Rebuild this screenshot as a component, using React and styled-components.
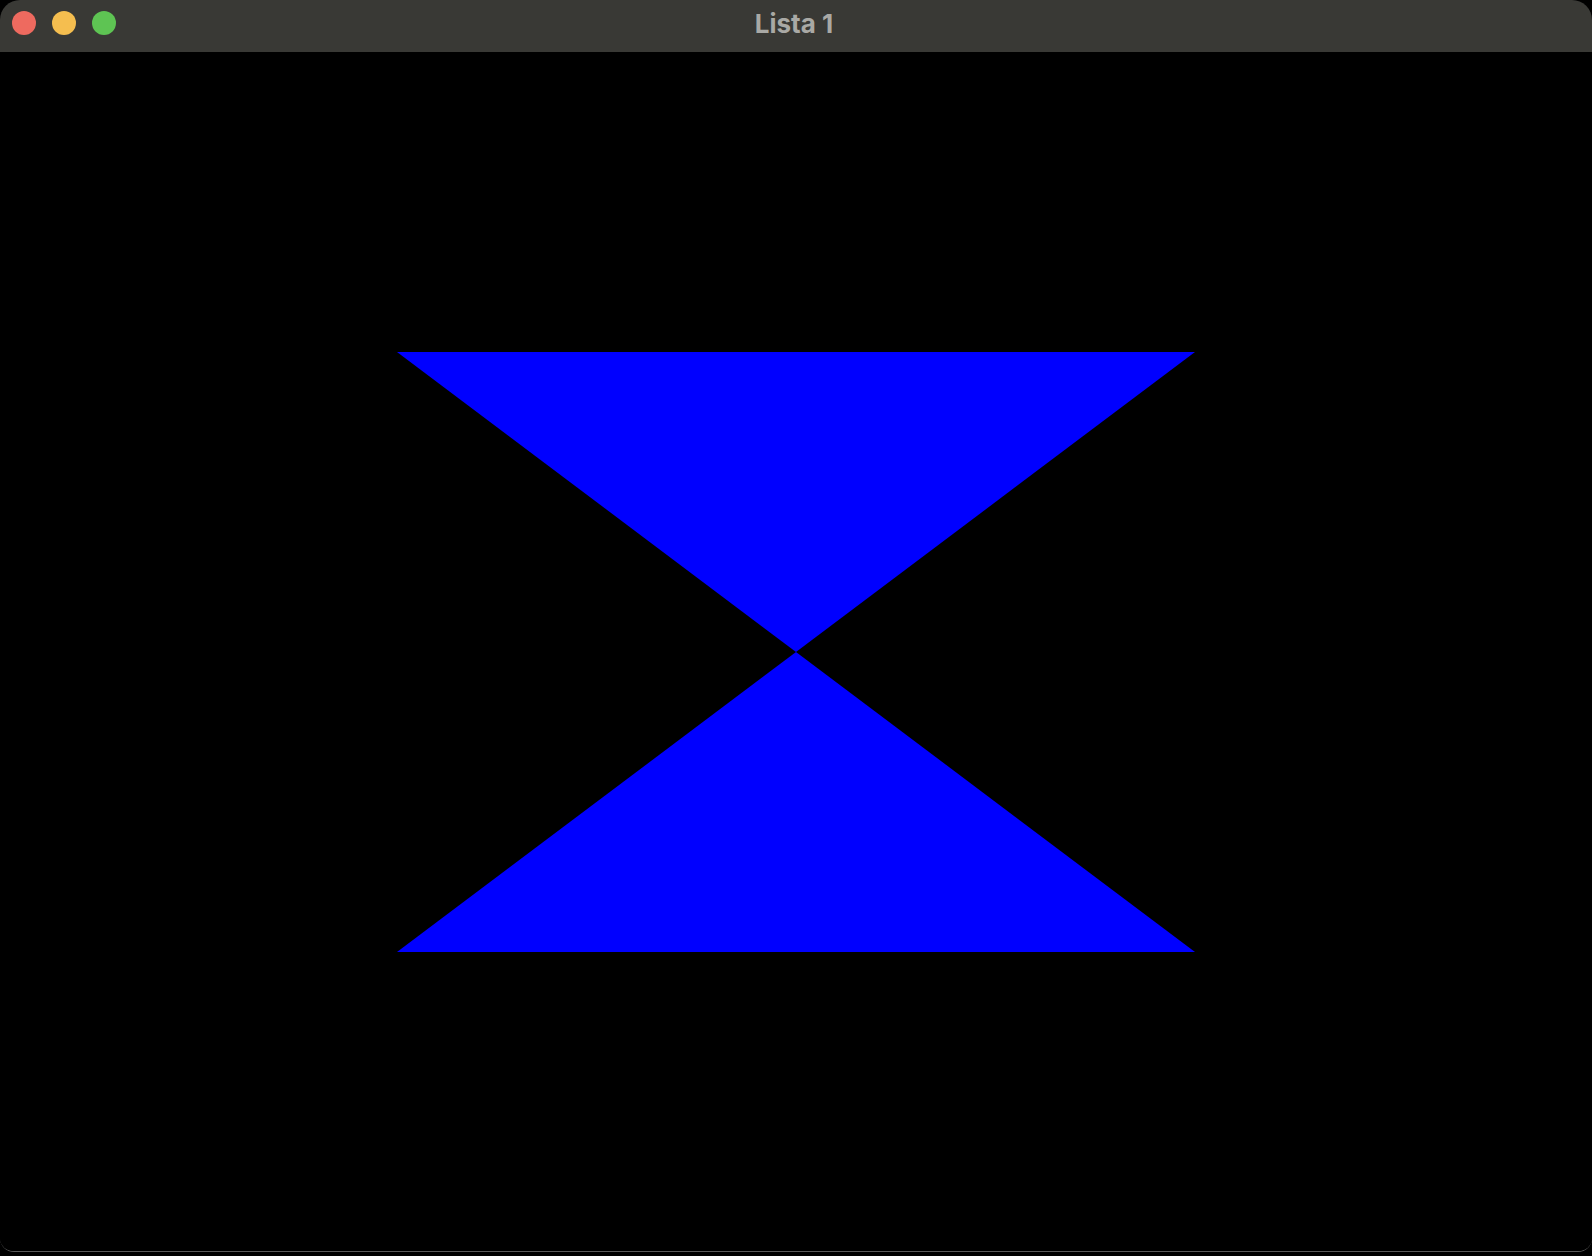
import styled, { createGlobalStyle } from 'styled-components';

const GlobalStyle = createGlobalStyle`
    html, body {
        margin: 0;
        padding: 0;
        background: #000;
    }
    #root {
        width: 1592px;
        height: 1256px;
    }
`;

const Window = styled.div`
    width: 1592px;
    height: 1252px;
    display: flex;
    flex-direction: column;
    background: #000;
    border-radius: 20px 20px 14px 14px;
    border-bottom: 1px solid #5a5a5a;
    overflow: hidden;
    box-sizing: border-box;
`;

const TitleBar = styled.div`
    height: 52px;
    flex: none;
    background: #393935;
    display: flex;
    align-items: center;
    position: relative;
    padding-left: 12px;
    gap: 16px;
`;

const Light = styled.span`
    width: 24px;
    height: 24px;
    border-radius: 50%;
    background: ${(p) => p.$color};
    margin-top: -6px;
`;

const Title = styled.div`
    position: absolute;
    left: 0;
    right: 4px;
    top: 0;
    height: 46px;
    display: flex;
    align-items: center;
    justify-content: center;
    font-family: Inter, "Liberation Sans", sans-serif;
    font-weight: 700;
    font-size: 26px;
    color: #a9a9a5;
    pointer-events: none;
`;

const Canvas = styled.div`
    flex: 1;
    background: #000;
`;

const Drawing = styled.svg`
    display: block;
    width: 100%;
    height: 100%;
`;

const App = () => {
    return (
        <>
            <GlobalStyle />
            <Window>
                <TitleBar>
                    <Light $color="#ee6a5f" />
                    <Light $color="#f5be4f" />
                    <Light $color="#5ec453" />
                    <Title>Lista 1</Title>
                </TitleBar>
                <Canvas>
                    <Drawing viewBox="0 0 1592 1199" preserveAspectRatio="xMinYMin meet">
                        <polygon points="397,300 1195,300 796,600" fill="#0000ff" />
                        <polygon points="796,600 1195,900 397,900" fill="#0000ff" />
                    </Drawing>
                </Canvas>
            </Window>
        </>
    );
};

export default App;
